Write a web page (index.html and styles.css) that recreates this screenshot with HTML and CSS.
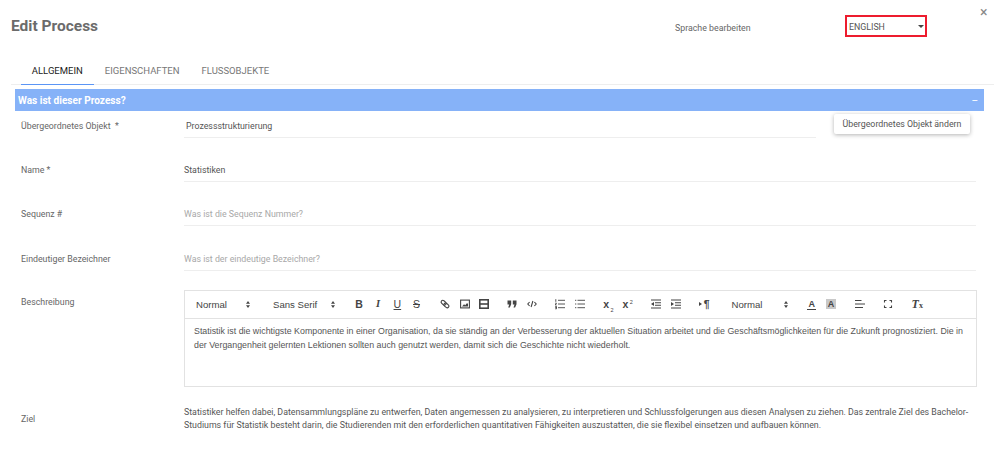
FILE: index.html
```html
<!DOCTYPE html>
<html lang="de">
<head>
<meta charset="utf-8">
<title>Edit Process</title>
<link rel="stylesheet" href="styles.css">
</head>
<body>
<div class="page">
  <header class="head">
    <h1 class="title">Edit Process</h1>
    <span class="lang-label">Sprache bearbeiten</span>
    <div class="lang-select"><span>ENGLISH</span><i class="caret"></i></div>
    <span class="close">×</span>
  </header>
  <nav class="tabs">
    <a class="tab active">ALLGEMEIN</a>
    <a class="tab">EIGENSCHAFTEN</a>
    <a class="tab">FLUSSOBJEKTE</a>
  </nav>
  <div class="bar"><span>Was ist dieser Prozess?</span><span class="minus">–</span></div>
  <div class="form">
    <div class="row first">
      <label class="lab">Übergeordnetes Objekt &nbsp;*</label>
      <div class="val parent">Prozessstrukturierung</div>
      <button class="change">Übergeordnetes Objekt ändern</button>
    </div>
    <div class="row">
      <label class="lab">Name *</label>
      <div class="val">Statistiken</div>
    </div>
    <div class="row">
      <label class="lab">Sequenz #</label>
      <div class="val ph">Was ist die Sequenz Nummer?</div>
    </div>
    <div class="row">
      <label class="lab">Eindeutiger Bezeichner</label>
      <div class="val ph">Was ist der eindeutige Bezeichner?</div>
    </div>
    <div class="row editor-row">
      <label class="lab">Beschreibung</label>
      <div class="editor">
        <div class="toolbar">
          <span class="pick p1">Normal<svg class="updown" viewBox="0 0 4 7"><path d="M2 0 4 2.800H0zM2 7 0 4.200H4z"/></svg></span>
          <span class="pick p2">Sans Serif<svg class="updown" viewBox="0 0 4 7"><path d="M2 0 4 2.800H0zM2 7 0 4.200H4z"/></svg></span>
          <div class="grp">
            <span class="btn b">B</span>
            <span class="btn it">I</span>
            <span class="btn un">U</span>
            <span class="btn st">S</span>
          </div>
          <div class="grp">
            <span class="btn"><svg class="ic" viewBox="0 0 10 10"><rect x=".9" y="2" width="5.500" height="3.400" rx="1.700" transform="rotate(40 3.600 3.700)"/><rect x="3.700" y="4.700" width="5.500" height="3.400" rx="1.700" transform="rotate(40 6.400 6.400)"/></svg></span>
            <span class="btn"><svg class="ic" viewBox="0 0 10 10"><rect x=".6" y="1.100" width="8.800" height="7.800"/><path class="fill" d="M2 7.500 4 5.200 5.300 6.300 6.500 4.500 8 4.500V7.500z"/></svg></span>
            <span class="btn"><svg class="ic thick" viewBox="0 0 10 10"><rect x=".8" y=".8" width="8.400" height="8.400"/><path d="M.8 5H9.200"/></svg></span>
          </div>
          <div class="grp">
            <span class="btn"><svg class="ic solid" viewBox="0 0 10 8"><path d="M.5 .5H4.200V4.200L2.800 7.500H1.200L2.200 4.500H.5zM5.800 .5H9.500V4.200L8.100 7.500H6.500L7.500 4.500H5.800z"/></svg></span>
            <span class="btn"><svg class="ic" viewBox="0 0 10 8"><path d="M2.600 2 .8 4l1.800 2M7.400 2 9.200 4 7.400 6M5.900 1 4.100 7"/></svg></span>
          </div>
          <div class="grp">
            <span class="btn"><svg class="ic thin" viewBox="0 0 10 10"><path d="M3 1.300H10M3 5H10M3 8.700H10M.8 .2V2.800M.2 4.200H1.500L.2 5.900H1.600M.2 7.400H1.500V9.800H.2M.2 8.600H1.500"/></svg></span>
            <span class="btn"><svg class="ic thin" viewBox="0 0 10 10"><path d="M2.500 1.300H10M2.500 5H10M2.500 8.700H10M0 1.300H1.300M0 5H1.300M0 8.700H1.300"/></svg></span>
          </div>
          <div class="grp">
            <span class="btn sc">x<sub>2</sub></span>
            <span class="btn sc">x<sup>2</sup></span>
          </div>
          <div class="grp">
            <span class="btn"><svg class="ic" viewBox="0 0 10 10"><path d="M0 1H10M4 3.700H10M4 6.300H10M0 9H10"/><path class="fill" d="M3 3V7L0 5z"/></svg></span>
            <span class="btn"><svg class="ic" viewBox="0 0 10 10"><path d="M0 1H10M4 3.700H10M4 6.300H10M0 9H10"/><path class="fill" d="M0 3V7L3 5z"/></svg></span>
          </div>
          <div class="grp">
            <span class="btn rtl"><i class="tri"></i>¶</span>
          </div>
          <span class="pick p3">Normal<svg class="updown" viewBox="0 0 4 7"><path d="M2 0 4 2.800H0zM2 7 0 4.200H4z"/></svg></span>
          <div class="grp">
            <span class="btn"><span class="color">A</span></span>
            <span class="btn"><span class="bg">A</span></span>
          </div>
          <div class="grp">
            <span class="btn"><svg class="ic" viewBox="0 0 10 10"><path d="M0 1.500H6.500M0 5H10M0 8.500H8"/></svg></span>
          </div>
          <div class="grp">
            <span class="btn"><svg class="ic full" viewBox="0 0 8 8"><path d="M.5 2.500V.5H2.500M5.500 .5H7.500V2.500M7.500 5.500V7.500H5.500M2.500 7.500H.5V5.500"/></svg></span>
          </div>
          <div class="grp">
            <span class="btn clean">T<small>x</small></span>
          </div>
        </div>
        <div class="content">Statistik ist die wichtigste Komponente in einer Organisation, da sie ständig an der Verbesserung der aktuellen Situation arbeitet und die Geschäftsmöglichkeiten für die Zukunft prognostiziert. Die in der Vergangenheit gelernten Lektionen sollten auch genutzt werden, damit sich die Geschichte nicht wiederholt.</div>
      </div>
    </div>
    <div class="row goal-row">
      <label class="lab">Ziel</label>
      <div class="goal">Statistiker helfen dabei, Datensammlungspläne zu entwerfen, Daten angemessen zu analysieren, zu interpretieren und Schlussfolgerungen aus diesen Analysen zu ziehen. Das zentrale Ziel des Bachelor-Studiums für Statistik besteht darin, die Studierenden mit den erforderlichen quantitativen Fähigkeiten auszustatten, die sie flexibel einsetzen und aufbauen können.</div>
    </div>
  </div>
</div>
</body>
</html>
```

FILE: styles.css
```css
* { box-sizing: border-box; }
html, body { margin: 0; padding: 0; background: #fff; }
body { font-family: Roboto, "Liberation Sans", sans-serif; color: #555; }
.page { width: 1000px; height: 452px; overflow: hidden; position: relative; }

.head { height: 56px; position: relative; display: flex; align-items: flex-start; padding: 15px 0 0 11px; }
.title { margin: 1px 0 0; font-size: 15.500px; line-height: 20px; font-weight: 700; color: #6b6b6b; width: 664px; }
.lang-label { font-size: 8.800px; line-height: 12px; color: #666; margin-top: 7px; width: 170px; }
.lang-select { width: 82px; height: 22px; border: 2px solid #ed1c2e; display: flex; align-items: center; justify-content: space-between; padding: 1px 1.500px 0 2px; font-size: 8.800px; color: #555; }
.caret { width: 0; height: 0; border-left: 3px solid transparent; border-right: 3px solid transparent; border-top: 3px solid #444; }
.close { position: absolute; left: 980px; top: 5px; font-size: 14px; line-height: 14px; color: #888; }

.tabs { height: 29px; display: flex; border-bottom: 1px solid #eee; margin: 0 6px 0 11px; padding-left: 10px; }
.tab { height: 29px; font-size: 9.500px; line-height: 30px; color: #777; padding: 0 11.250px 0 10.750px; }
.tab.active { color: #222; border-bottom: 1px solid #5b95f5; }

.bar { margin: 4px 16px 0 15px; height: 22px; background: #86b2f8; color: #fff; font-size: 10.100px; font-weight: 700; line-height: 23px; padding: 0 6px 0 3px; display: flex; justify-content: space-between; }
.minus { font-weight: 400; }

.form { padding: 0 24px 0 21px; }
.row { display: grid; grid-template-columns: 163px 1fr; height: 44.300px; font-size: 8.800px; }
.row.first { height: 37px; grid-template-columns: 163px 632px 136px; column-gap: 0; }
.lab { color: #666; padding-top: 16px; line-height: 12px; }
.row.first .lab { padding-top: 9px; }
.val { height: 34px; line-height: 12px; padding-top: 16px; border-bottom: 1px solid #eee; color: #555; }
.row.first .val { height: 27px; padding: 9px 0 0 2px; }
.ph { color: #a8a8a8; }
.change { margin: 3px 0 0 18px; width: 136px; height: 20px; border: 0; background: #fff; box-shadow: 0 1px 4px rgba(0,0,0,.3); font: 8.800px Roboto, sans-serif; color: #555; border-radius: 2px; padding: 0; white-space: nowrap; }

.row.editor-row { height: 125.100px; padding-top: 9.100px; }
.editor-row .lab { padding-top: 6px; }
.editor { width: 793px; height: 97px; border: 1px solid #e2e2e2; font-family: "Liberation Sans", sans-serif; }
.toolbar { height: 28px; border-bottom: 1px solid #e2e2e2; display: flex; align-items: center; padding-left: 3px; font-size: 9.600px; color: #444; }
.pick { display: flex; align-items: center; justify-content: space-between; padding: 0 5px 0 8px; margin-right: 9.600px; height: 100%; }
.p1 { width: 67.400px; }
.p2 { width: 74.800px; }
.p3 { width: 69px; }
.updown { width: 4px; height: 7px; fill: #444; }
.grp { display: flex; margin-right: 9.600px; }
.btn { width: 19.200px; height: 14px; display: flex; align-items: center; justify-content: center; font-size: 10.500px; line-height: 14px; color: #444; }
.b { font-weight: 700; }
.it { font-style: italic; font-family: "Liberation Serif", serif; font-weight: 700; }
.un { text-decoration: underline; }
.st { text-decoration: line-through; }
.ic { width: 10px; height: 10px; fill: none; stroke: #444; stroke-width: 1.100; overflow: visible; }
.ic .fill { fill: #444; stroke: none; }
.ic.thick { stroke-width: 1.600; }
.ic.thin { stroke-width: .9; }
.ic.solid { fill: #444; stroke: none; height: 8px; }
.ic.full { width: 8px; height: 8px; }
.sc { display: block; text-align: center; font-weight: 700; font-size: 10.500px; }
.sc sub, .sc sup { font-size: 5.500px; font-weight: 400; line-height: 0; margin-left: 1.500px; }
.rtl { font-size: 10.500px; font-weight: 700; }
.tri { width: 0; height: 0; border-top: 2px solid transparent; border-bottom: 2px solid transparent; border-left: 3px solid #444; margin-right: 1.500px; }
.color { font-size: 9px; font-weight: 700; line-height: 10px; padding: 0 1px; border-bottom: 1.500px solid #444; }
.bg { font-size: 9px; font-weight: 700; line-height: 10px; padding: 0 1.500px; background: #c8c8c8; }
.clean { font-style: italic; font-family: "Liberation Serif", serif; font-size: 12px; font-weight: 700; }
.clean small { font-size: 8px; font-weight: 700; font-style: normal; align-self: flex-end; line-height: 10px; }
.content { padding: 5.500px 9px 0 9px; font-size: 8.840px; line-height: 14px; color: #555; }
.goal-row { height: 40px; }
.goal-row .lab { padding-top: 7px; }
.goal { font-size: 8.800px; line-height: 13px; color: #555; }
```
